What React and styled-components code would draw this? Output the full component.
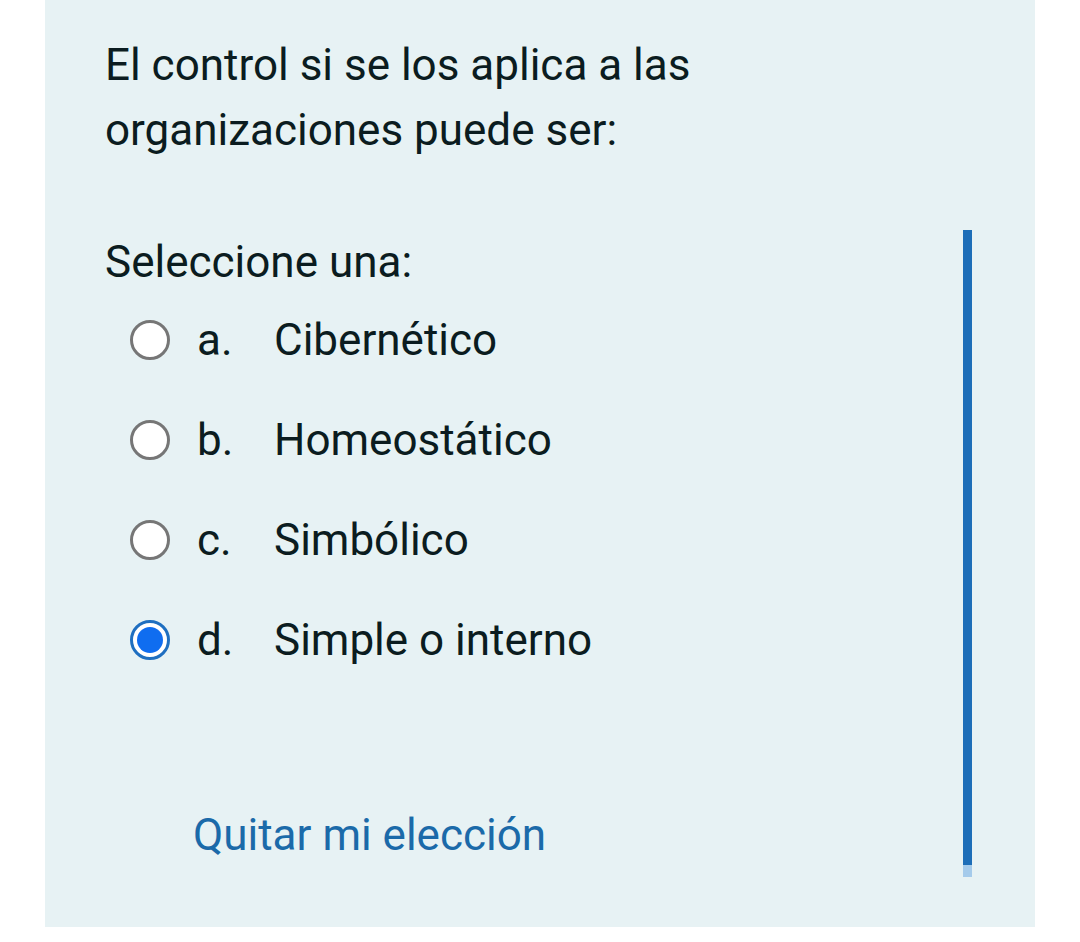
import React, { useState } from "react";
import styled, { createGlobalStyle } from "styled-components";

const GlobalStyle = createGlobalStyle`
  body {
    margin: 0;
    background: #ffffff;
    font-family: Roboto, "Noto Sans", sans-serif;
  }
`;

const Panel = styled.div`
  position: relative;
  box-sizing: border-box;
  margin-left: 45px;
  width: 990px;
  height: 927px;
  background: #e7f2f4;
  padding: 33px 0 0 60px;
  color: #0b1c20;
`;

const Question = styled.p`
  margin: 0;
  font-size: 44px;
  line-height: 65px;
  width: 640px;
`;

const Prompt = styled.p`
  margin: 69px 0 0;
  font-size: 44px;
  line-height: 60px;
`;

const Options = styled.div`
  display: flex;
  flex-direction: column;
  margin-top: -2px;
`;

const Row = styled.label`
  display: flex;
  align-items: center;
  height: 100px;
  padding-left: 25px;
  font-size: 44px;
  cursor: pointer;
`;

const Radio = styled.span`
  box-sizing: border-box;
  width: 40px;
  height: 40px;
  border-radius: 50%;
  background: #ffffff;
  border: 3px solid ${({ checked }) => (checked ? "#1f6fc0" : "#767676")};
  display: flex;
  align-items: center;
  justify-content: center;
  margin-right: 27px;

  &::after {
    content: "";
    width: 26px;
    height: 26px;
    border-radius: 50%;
    background: #0f6df0;
    display: ${({ checked }) => (checked ? "block" : "none")};
  }
`;

const Letter = styled.span`
  width: 77px;
`;

const Clear = styled.a`
  display: inline-block;
  margin: 119px 0 0 88px;
  font-size: 44px;
  color: #1b6aa9;
  text-decoration: none;
`;

const Bar = styled.div`
  position: absolute;
  left: 918px;
  top: 230px;
  width: 9px;
  height: 647px;
  background: linear-gradient(#1d6eb8 0 635px, #a5cbeb 635px);
`;

const options = [
  ["a.", "Cibernético"],
  ["b.", "Homeostático"],
  ["c.", "Simbólico"],
  ["d.", "Simple o interno"],
];

export default function App() {
  const [selected, setSelected] = useState(3);

  return (
    <>
      <GlobalStyle />
      <Panel>
        <Question>El control si se los aplica a las organizaciones puede ser:</Question>
        <Prompt>Seleccione una:</Prompt>
        <Options>
          {options.map(([letter, text], i) => (
            <Row key={letter} onClick={() => setSelected(i)}>
              <Radio checked={selected === i} />
              <Letter>{letter}</Letter>
              {text}
            </Row>
          ))}
        </Options>
        <Clear href="#" onClick={(e) => { e.preventDefault(); setSelected(null); }}>
          Quitar mi elección
        </Clear>
        <Bar />
      </Panel>
    </>
  );
}
